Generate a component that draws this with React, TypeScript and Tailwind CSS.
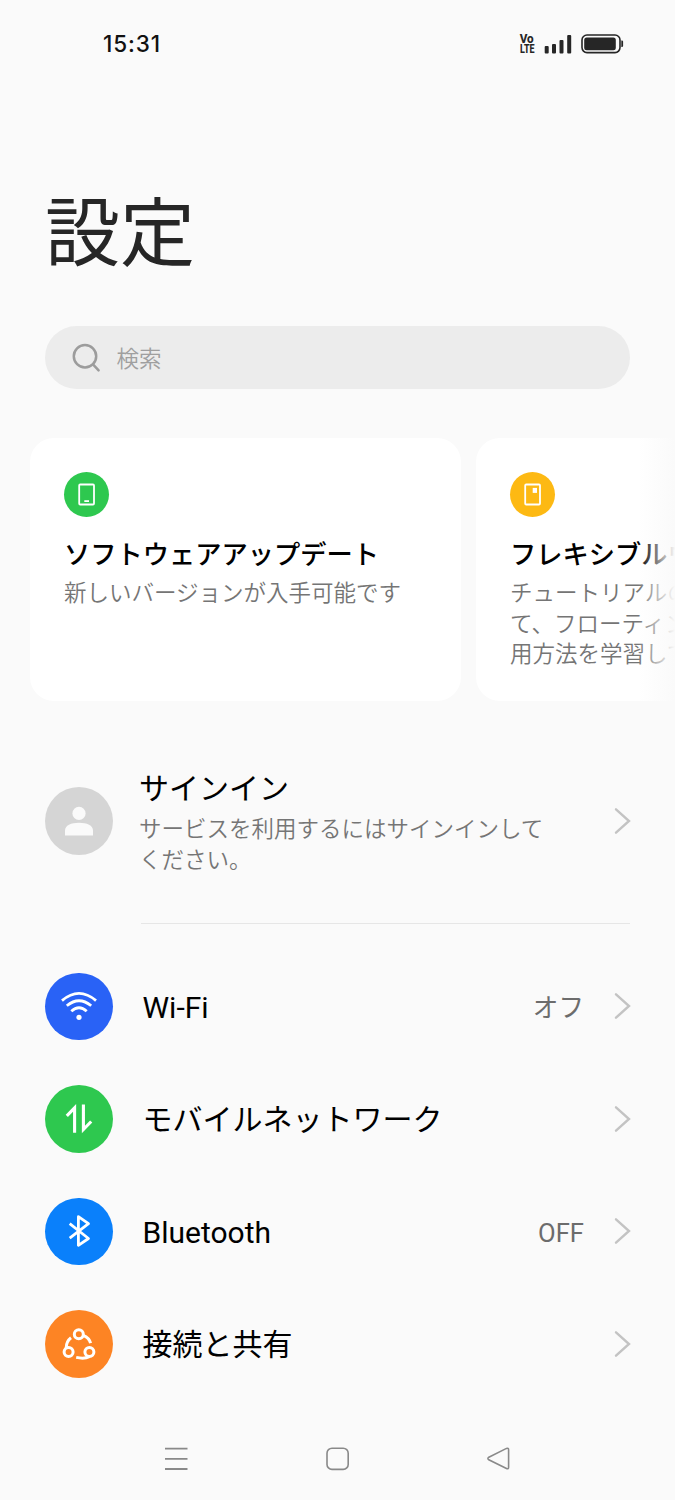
import type { ReactNode } from "react";

const jp = "font-[Roboto,'Noto_Sans_CJK_JP',sans-serif]";

function Chevron() {
  return (
    <svg className="h-[28px] w-[18px] shrink-0" viewBox="0 0 18 28" fill="none" stroke="#c3c3c3" strokeWidth="2.4">
      <path d="M2 2.3 L15 14 L2 25.7" strokeLinecap="round" strokeLinejoin="miter" />
    </svg>
  );
}

function StatusBar() {
  return (
    <header className="flex h-[87px] items-center justify-between pr-[51px] pl-[103px]">
      <time className="font-[Inter,sans-serif] text-[22.5px] leading-[30px] font-medium tracking-[0.9px] text-[#111]">15:31</time>
      <svg className="h-[24px] w-[105px]" viewBox="519 31 105 24" fill="#262626">
        <g fontFamily="Roboto, sans-serif" fontWeight="800" fontSize="12.2">
          <text x="519.7" y="41.9" textLength="14" lengthAdjust="spacingAndGlyphs">Vo</text>
          <text x="520" y="52" textLength="14.5" lengthAdjust="spacingAndGlyphs">LTE</text>
        </g>
        <rect x="544.7" y="45" width="4" height="7.4" rx="1" />
        <rect x="552" y="43" width="4" height="9.4" rx="1" />
        <rect x="559.5" y="39" width="4" height="13.4" rx="1" />
        <rect x="567.2" y="34" width="4" height="18.4" rx="1" />
        <rect x="582" y="34" width="38" height="17.6" rx="5" fill="none" stroke="#262626" strokeWidth="1.6" />
        <rect x="584.2" y="36.4" width="31.6" height="12.8" rx="2.5" />
        <path d="M621.3 39.5h.6q1.2 0 1.2 1.2v4q0 1.2-1.2 1.2h-.6z" />
      </svg>
    </header>
  );
}

function Card({ color, icon, title, lines }: { color: string; icon: ReactNode; title: string; lines: string[] }) {
  return (
    <article className="h-[263px] w-[431px] shrink-0 rounded-[24px] bg-white pt-[34px] pl-[34px]">
      <div className={`flex size-[45px] items-center justify-center rounded-full ${color}`}>{icon}</div>
      <h2 className="mt-[19px] text-[26.25px] leading-[38px] font-medium whitespace-nowrap text-black">{title}</h2>
      <div className="mt-[4px] text-[22.5px] leading-[30.5px] font-[350] whitespace-nowrap text-[#757575]">
        {lines.map((line) => (
          <p key={line}>{line}</p>
        ))}
      </div>
    </article>
  );
}

function Row({ color, icon, label, value }: { color: string; icon: ReactNode; label: string; value?: string }) {
  return (
    <li className="flex h-[112.5px] items-center pr-[43px] pl-[45px]">
      <div className={`flex size-[67.5px] shrink-0 items-center justify-center rounded-full ${color}`}>{icon}</div>
      <span className="ml-[30px] flex-1 pt-[3px] text-[30px] leading-[40px] text-black">{label}</span>
      {value && <span className="mr-[30px] pt-[3px] text-[25.6px] leading-[36px] text-[#6c6c6c]">{value}</span>}
      <Chevron />
    </li>
  );
}

const wifi = (
  <svg className="size-[40px]" viewBox="0 0 40 40" fill="none" stroke="white" strokeWidth="2.8">
    <path d="M3 14.6Q20 .2 37 14.6M7.8 19.8Q20 9.6 32.2 19.8M12.3 25.3Q20 18.2 27.7 25.3" />
    <circle cx="20" cy="31.3" r="2.6" fill="white" stroke="none" />
  </svg>
);

const mobile = (
  <svg className="size-[40px]" viewBox="0 0 40 40" fill="none" stroke="white" strokeWidth="3.1">
    <path d="M7.8 16.8 L15.6 8.8 V33.8M24.4 5.5 V30.5 L32.2 22.5" />
  </svg>
);

const bluetooth = (
  <svg className="size-[40px]" viewBox="0 0 40 40" fill="none" stroke="white" strokeWidth="2.8" strokeLinejoin="round">
    <path d="M10.7 12.7 L29.5 27.5 L19.4 34.3 V5.7 L29.5 12.7 L10.7 27.2" />
  </svg>
);

const sharing = (
  <svg className="size-[40px]" viewBox="0 0 40 40" fill="none" stroke="white" strokeWidth="3">
    <circle cx="19.8" cy="10.3" r="4.5" />
    <circle cx="9.6" cy="27.9" r="4.5" />
    <circle cx="30.4" cy="27.9" r="4.5" />
    <path d="M24.2 11.3Q30.3 13.7 31.6 19.2M12 13.8Q7.2 17.5 7.2 24M17.2 33.4Q25.8 35.2 30.2 32.6" />
  </svg>
);

export default function App() {
  return (
    <div className={`flex h-[1500px] w-[675px] flex-col overflow-hidden bg-[#fafafa] ${jp}`} lang="ja">
      <StatusBar />
      <h1 className="mt-[93px] ml-[45px] text-[75px] leading-[108px] text-[#262626]">設定</h1>

      <div className="mx-[45px] mt-[38px] flex h-[63px] shrink-0 items-center rounded-full bg-[#ececec] pl-[27px]">
        <svg className="size-[30px]" viewBox="0 0 30 30" fill="none" stroke="#9c9c9c" strokeWidth="2.5">
          <circle cx="13" cy="13.3" r="11.2" />
          <path d="M21 21.3 L26.6 27.4" strokeLinecap="round" />
        </svg>
        <span className="ml-[14.5px] pt-[2px] text-[22.5px] leading-[32px] font-[350] text-[#9f9f9f]">検索</span>
      </div>

      <section className="relative mt-[49px] flex h-[263px] shrink-0 gap-[15px] overflow-hidden pl-[30px]">
        <Card
          color="bg-[#2ec84f]"
          title="ソフトウェアアップデート"
          lines={["新しいバージョンが入手可能です"]}
          icon={
            <svg className="size-[24px]" viewBox="0.5 0.5 24 24" fill="none" stroke="white" strokeWidth="1.8">
              <rect x="4.7" y="2" width="14.8" height="20" rx="1" />
              <path d="M9.8 18.6h4.7" />
            </svg>
          }
        />
        <Card
          color="bg-[#fdb913]"
          title="フレキシブルウィンドウ"
          lines={["チュートリアルのビデオを見", "て、フローティングウィンドウの使", "用方法を学習してください"]}
          icon={
            <svg className="size-[24px]" viewBox="0.5 0.5 24 24" fill="none" stroke="white" strokeWidth="1.8">
              <rect x="4.7" y="2" width="14.8" height="20" rx="1" />
              <rect x="12.2" y="5.4" width="4.3" height="5" fill="white" stroke="none" />
            </svg>
          }
        />
        <div className="absolute inset-y-0 right-0 w-[37px] bg-linear-to-r from-[#fafafa]/0 to-[#fafafa]" />
      </section>

      <section className="mt-[65px] flex h-[110px] shrink-0 items-center pr-[43px] pl-[45px]">
        <div className="flex size-[67.5px] items-center justify-center rounded-full bg-[#d5d5d5]">
          <svg className="size-[40px]" viewBox="0 0 40 40" fill="#fafafa">
            <circle cx="20" cy="12.4" r="6.6" />
            <path d="M6 34.6V29.5C6 24.5 12 21.8 20 21.8S34 24.5 34 29.5V34.6Z" />
          </svg>
        </div>
        <div className="ml-[26.5px] flex-1 pt-[2px]">
          <h2 className="text-[30px] leading-[40px] text-black">サインイン</h2>
          <p className="mt-[5px] text-[22.5px] leading-[30.5px] font-[350] whitespace-nowrap text-[#757575]">
            サービスを利用するにはサインインして
            <br />
            ください。
          </p>
        </div>
        <Chevron />
      </section>
      <hr className="mt-[47px] mr-[45px] ml-[141px] border-t border-[#e6e6e6]" />

      <ul className="mt-[26px]">
        <Row color="bg-[#2962f6]" icon={wifi} label="Wi-Fi" value="オフ" />
        <Row color="bg-[#2ec84f]" icon={mobile} label="モバイルネットワーク" />
        <Row color="bg-[#0a80fb]" icon={bluetooth} label="Bluetooth" value="OFF" />
        <Row color="bg-[#fd8424]" icon={sharing} label="接続と共有" />
      </ul>

      <nav className="mt-auto flex h-[82px] shrink-0 items-center justify-between px-[163px]">
        <svg className="size-[26px]" viewBox="0 0 26 26" stroke="#898989" strokeWidth="1.8">
          <path d="M2 2.6H24.5M2 12.8H24.5M2 23H24.5" />
        </svg>
        <svg className="size-[26px]" viewBox="0 0 26 26" fill="none" stroke="#898989" strokeWidth="1.6">
          <rect x="2" y="2.2" width="21.2" height="21.2" rx="5" />
        </svg>
        <svg className="size-[26px]" viewBox="0 0 26 26" fill="none" stroke="#898989" strokeWidth="1.6">
          <path d="M2.8 11.2 L20.5 2.4Q22.6 1.7 22.6 4V21Q22.6 23.5 20.5 22.5L2.8 13.8Q1 12.5 2.8 11.2Z" />
        </svg>
      </nav>
    </div>
  );
}
